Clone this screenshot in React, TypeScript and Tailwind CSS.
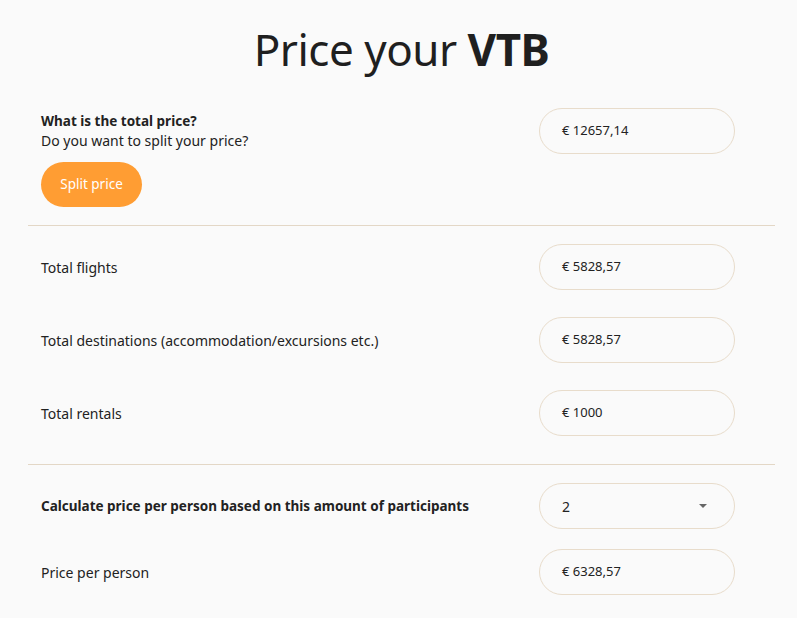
import { useState } from 'react'

const font = { fontFamily: '"Noto Sans", "Open Sans", sans-serif' }

function PriceField({ value }: { value: string }) {
  return (
    <div className="w-[196px] h-[46px] rounded-full border border-[#e8dccb] bg-[#fafafa] flex items-center pl-[22px] text-[13px] text-[#222]">
      {value}
    </div>
  )
}

export default function App() {
  const [participants, setParticipants] = useState('2')

  return (
    <div className="min-h-screen bg-[#fafafa] text-[#222]" style={font}>
      <div className="pl-[28px] pr-[22px]">
        <h1 className="text-center text-[44px] leading-none font-normal pt-[27px] pb-[37px] text-[#1f1f1f] tracking-[-0.5px]">
          Price your <span className="font-bold">VTB</span>
        </h1>

        {/* Total price */}
        <div className="grid grid-cols-[1fr_196px] pl-[13px] pr-[40px] pb-[18px] border-b border-[#e3d7c6]">
          <div className="pt-[3px]">
            <div className="text-[13.5px] leading-5 font-bold">What is the total price?</div>
            <div className="text-[14px] leading-5">Do you want to split your price?</div>
            <button className="mt-[11px] h-[45px] w-[101px] rounded-full bg-[#ff9d33] text-white text-[13.5px]">
              Split price
            </button>
          </div>
          <div>
            <PriceField value="€ 12657,14" />
          </div>
        </div>

        {/* Split parts */}
        <div className="flex flex-col gap-[27px] pl-[13px] pr-[40px] pt-[18px] pb-[28px] border-b border-[#e3d7c6]">
          <div className="flex items-center justify-between">
            <span className="text-[14px]">Total flights</span>
            <PriceField value="€ 5828,57" />
          </div>
          <div className="flex items-center justify-between">
            <span className="text-[14px]">Total destinations (accommodation/excursions etc.)</span>
            <PriceField value="€ 5828,57" />
          </div>
          <div className="flex items-center justify-between">
            <span className="text-[14px]">Total rentals</span>
            <PriceField value="€ 1000" />
          </div>
        </div>

        {/* Per person */}
        <div className="flex flex-col gap-[20px] pl-[13px] pr-[40px] pt-[18px]">
          <div className="flex items-center justify-between">
            <span className="text-[13.5px] font-bold">Calculate price per person based on this amount of participants</span>
            <div className="relative w-[196px] h-[46px]">
              <select
                value={participants}
                onChange={(e) => setParticipants(e.target.value)}
                className="appearance-none w-full h-full rounded-full border border-[#e8dccb] bg-[#fafafa] pl-[22px] text-[14px] text-[#222] outline-none"
                style={font}
              >
                {[1, 2, 3, 4, 5, 6].map((n) => (
                  <option key={n} value={String(n)}>
                    {n}
                  </option>
                ))}
              </select>
              <svg className="absolute right-[28px] top-[21px] pointer-events-none" width="8" height="4" viewBox="0 0 8 4">
                <path d="M0 0h8L4 4z" fill="#666" />
              </svg>
            </div>
          </div>
          <div className="flex items-center justify-between">
            <span className="text-[14px]">Price per person</span>
            <PriceField value="€ 6328,57" />
          </div>
        </div>
      </div>
    </div>
  )
}
